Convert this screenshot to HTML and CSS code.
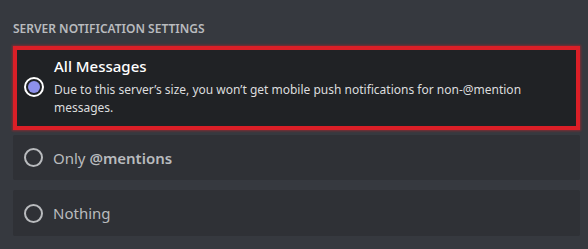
FILE: index.html
```html
<!DOCTYPE html>
<html lang="en">
<head>
<meta charset="utf-8">
<title>Server Notification Settings</title>
<link rel="stylesheet" href="styles.css">
</head>
<body>
<section class="settings">
  <h2 class="settings-title">Server Notification Settings</h2>
  <div class="options">
    <label class="option option-selected">
      <span class="radio radio-on"><span class="radio-dot"></span></span>
      <span class="option-body">
        <span class="option-label">All Messages</span>
        <span class="option-desc">Due to this server’s size, you won’t get mobile push notifications for <span class="nowrap">non-@mention</span> messages.</span>
      </span>
    </label>
    <label class="option">
      <span class="radio"></span>
      <span class="option-body">
        <span class="option-label muted">Only <b class="mention">@mentions</b></span>
      </span>
    </label>
    <label class="option">
      <span class="radio"></span>
      <span class="option-body">
        <span class="option-label muted">Nothing</span>
      </span>
    </label>
  </div>
</section>
</body>
</html>
```

FILE: styles.css
```css
html, body {
  margin: 0;
  padding: 0;
  background: #36393f;
  width: 588px;
  height: 249px;
  overflow: hidden;
}

body {
  font-family: "Noto Sans", "Open Sans", sans-serif;
  color: #dcddde;
}

.settings {
  padding: 21px 8px 0 13px;
}

.settings-title {
  margin: 0 0 9px;
  font-size: 12px;
  line-height: 16px;
  font-weight: 600;
  text-transform: uppercase;
  color: #b9bbbe;
}

.options {
  display: flex;
  flex-direction: column;
  gap: 5px;
}

.option {
  display: flex;
  align-items: center;
  gap: 10px;
  padding: 0 11px;
  min-height: 45px;
  background: #2f3136;
  border-radius: 2px;
  box-sizing: border-box;
}

.option + .option + .option {
  margin-top: 5px;
  min-height: 46px;
}

.option-selected {
  background: #202225;
  outline: 4px solid #db1f27;
  outline-offset: -4px;
  box-shadow: 0 0 2px 1px rgba(219, 31, 39, 0.45);
  padding-top: 10px;
  padding-bottom: 13px;
  border-radius: 0;
}

.radio {
  flex: 0 0 auto;
  width: 19px;
  height: 19px;
  box-sizing: border-box;
  border: 2px solid #b9bbbe;
  border-radius: 50%;
  display: flex;
  align-items: center;
  justify-content: center;
}

.radio-on {
  width: 20px;
  height: 20px;
  border-color: #ffffff;
}

.radio-dot {
  width: 12px;
  height: 12px;
  border-radius: 50%;
  background: #8d90ea;
}

.option-body {
  display: flex;
  flex-direction: column;
}

.option-label {
  font-size: 15px;
  line-height: 20px;
  color: #ffffff;
  font-weight: 500;
}

.option-label.muted {
  color: #b9bbbe;
  font-weight: 400;
}

.mention {
  font-weight: 600;
}

.option-desc {
  margin-top: 5px;
  font-size: 12px;
  line-height: 18px;
  color: #dcddde;
  max-width: 500px;
}

.nowrap {
  white-space: nowrap;
}
```
